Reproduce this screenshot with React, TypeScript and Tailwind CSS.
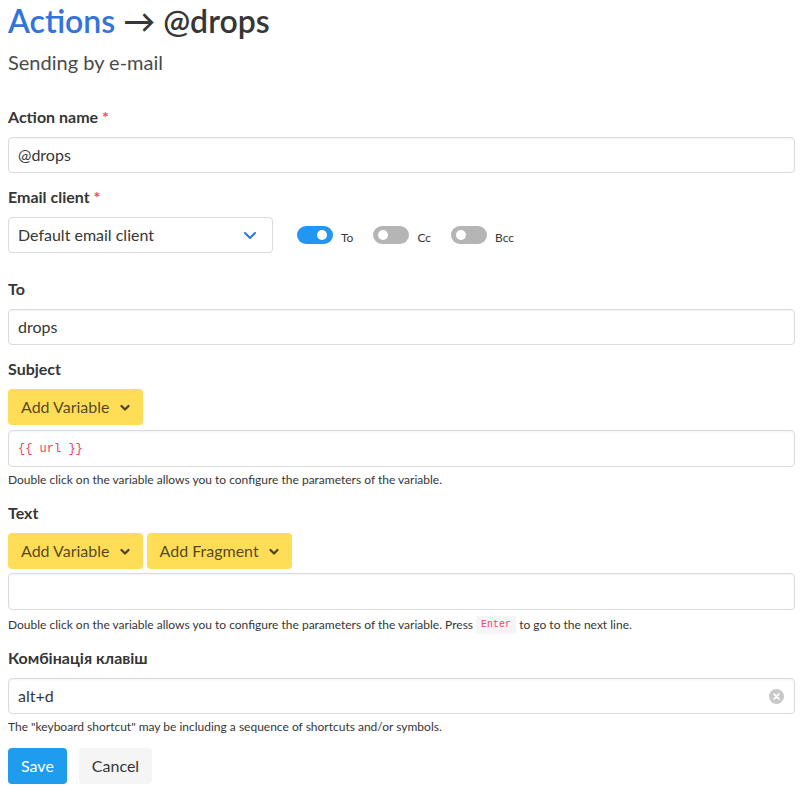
import React from "react";

const font = { fontFamily: "Lato, 'Noto Sans', sans-serif" };

function Chevron({ className = "" }: { className?: string }) {
  return (
    <svg width="10" height="8" viewBox="0 0 10 8" className={className}>
      <path d="M1.5 2 L5 5.5 L8.5 2" fill="none" stroke="currentColor" strokeWidth="2.2" strokeLinecap="round" strokeLinejoin="round" />
    </svg>
  );
}

function Label({ text, required, className = "" }: { text: string; required?: boolean; className?: string }) {
  return (
    <div className={"h-6 text-[16px] leading-6 font-bold text-[#363636] " + className}>
      {text}
      {required && <span className="text-[#f14668]"> *</span>}
    </div>
  );
}

function Toggle({ on, label }: { on?: boolean; label: string }) {
  return (
    <div className="flex items-center">
      <div className={"relative w-9 h-[18px] rounded-full " + (on ? "bg-[#2196f3]" : "bg-[#b5b5b5]")}>
        <div className={"absolute top-[4px] w-[10px] h-[10px] rounded-full bg-white " + (on ? "left-[20px]" : "left-[5px]")} />
      </div>
      <span className="ml-2 mt-[5px] text-[12px] text-[#363636]">{label}</span>
    </div>
  );
}

function YellowBtn({ text }: { text: string }) {
  return (
    <button className="h-9 px-[13px] rounded-[4px] bg-[#ffdd57] text-[16px] text-[rgba(0,0,0,0.7)] flex items-center">
      <span>{text}</span>
      <Chevron className="ml-[10px] mt-[1px]" />
    </button>
  );
}

const inputCls =
  "w-full rounded-[4px] border border-[#dbdbdb] bg-white shadow-[inset_0_1px_2px_rgba(10,10,10,0.05)] flex items-center px-[9px] text-[16px] text-[#363636]";

export default function App() {
  return (
    <div className="px-2 pt-[2px] bg-white min-h-[791px] w-[803px]" style={font}>
      <div className="h-[38px] text-[32px] leading-[38px] font-semibold text-[#363636]">
        <span className="text-[#3273dc]">Actions</span> → @drops
      </div>
      <div className="mt-[10px] h-[25px] text-[20px] leading-[25px] text-[#4a4a4a]">Sending by e-mail</div>

      <Label text="Action name" required className="mt-[30px]" />
      <div className={inputCls + " mt-2 h-9"}>@drops</div>

      <Label text="Email client" required className="mt-3" />
      <div className="mt-2 flex items-center">
        <div className={"w-[265px] h-9 rounded-[4px] border border-[#dbdbdb] bg-white flex items-center justify-between pl-[9px] pr-[15px] text-[16px] text-[#363636]"}>
          <span>Default email client</span>
          <svg width="14" height="9" viewBox="0 0 14 9">
            <path d="M2 2 L7 7 L12 2" fill="none" stroke="#3273dc" strokeWidth="2" strokeLinecap="round" strokeLinejoin="round" />
          </svg>
        </div>
        <div className="ml-6 flex items-center gap-5">
          <Toggle on label="To" />
          <Toggle label="Cc" />
          <Toggle label="Bcc" />
        </div>
      </div>

      <Label text="To" className="mt-6" />
      <div className={inputCls + " mt-2 h-9"}>drops</div>

      <Label text="Subject" className="mt-3" />
      <div className="mt-2 flex">
        <YellowBtn text="Add Variable" />
      </div>
      <div className={inputCls + " mt-[5px] h-[37px]"}>
        <span className="text-[12px] text-[#ff3860]" style={{ fontFamily: "'Liberation Mono', monospace" }}>
          {"{{ url }}"}
        </span>
      </div>
      <div className="mt-1 h-[18px] text-[12px] leading-[18px] text-[#363636]">
        Double click on the variable allows you to configure the parameters of the variable.
      </div>

      <Label text="Text" className="mt-3" />
      <div className="mt-2 flex gap-1">
        <YellowBtn text="Add Variable" />
        <YellowBtn text="Add Fragment" />
      </div>
      <div className={inputCls + " mt-[4px] h-[37px]"} />
      <div className="mt-[6px] h-[18px] text-[12px] leading-[18px] text-[#363636]">
        Double click on the variable allows you to configure the parameters of the variable. Press{" "}
        <code
          className="inline-block px-[5px] h-[18px] leading-[18px] bg-[#f5f5f5] text-[10px] text-[#f14668] align-top"
          style={{ fontFamily: "'Liberation Mono', monospace" }}
        >
          Enter
        </code>{" "}
        to go to the next line.
      </div>

      <Label text="Комбінація клавіш" className="mt-3" />
      <div className={inputCls + " mt-2 h-9 justify-between pr-[10px]"}>
        <span>alt+d</span>
        <svg width="15" height="15" viewBox="0 0 16 16">
          <circle cx="8" cy="8" r="8" fill="#c8c8c8" />
          <path d="M5.5 5.5 L10.5 10.5 M10.5 5.5 L5.5 10.5" stroke="white" strokeWidth="2" strokeLinecap="round" />
        </svg>
      </div>
      <div className="mt-1 h-[18px] text-[12px] leading-[18px] text-[#363636]">
        The "keyboard shortcut" may be including a sequence of shortcuts and/or symbols.
      </div>

      <div className="mt-3 flex gap-3">
        <button className="h-9 px-[13px] rounded-[4px] bg-[#209cee] text-white text-[16px]">Save</button>
        <button className="h-9 px-[13px] rounded-[4px] bg-[#f5f5f5] text-[#363636] text-[16px]">Cancel</button>
      </div>
    </div>
  );
}
